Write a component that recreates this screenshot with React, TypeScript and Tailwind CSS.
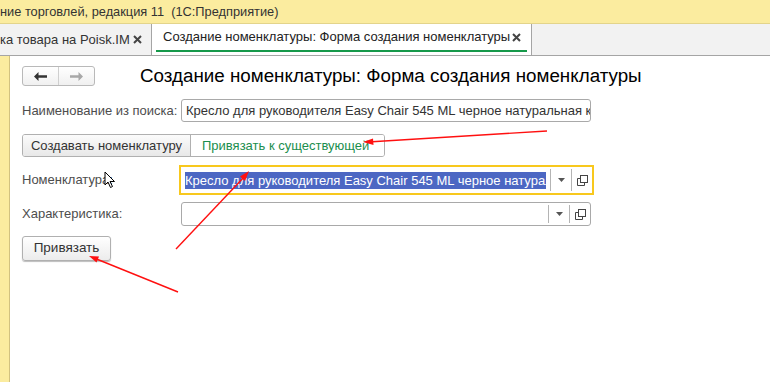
import React from 'react';

const font = { fontFamily: '"Liberation Sans", Arial, sans-serif' };

const CloseX: React.FC = () => (
  <svg width="9" height="9" viewBox="0 0 9 9" stroke="#444" strokeWidth="2">
    <path d="M1 1 L8 8 M8 1 L1 8" />
  </svg>
);

const DropButtons: React.FC = () => (
  <div className="flex h-full items-stretch">
    <div className="flex w-[21px] items-center justify-center border-l border-[#b4b4b4] my-[2px]">
      <svg width="7" height="4" viewBox="0 0 7 4">
        <path d="M0 0 H7 L3.5 4 Z" fill="#555" />
      </svg>
    </div>
    <div className="flex w-[21px] items-center justify-center border-l border-[#b4b4b4] my-[2px]">
      <svg width="11" height="11" viewBox="0 0 11 11" fill="none" stroke="#444" strokeWidth="1">
        <rect x="3.5" y="0.5" width="7" height="7" />
        <path d="M0.5 3.5 V10.5 H7.5 V8" />
        <path d="M0.5 3.5 H3" />
      </svg>
    </div>
  </div>
);

const Arrows: React.FC = () => (
  <svg className="absolute inset-0 pointer-events-none" width="770" height="382" viewBox="0 0 770 382">
    <g stroke="#ff1010" strokeWidth="1.4" fill="#ff1010">
      <line x1="547" y1="131" x2="368" y2="142" />
      <polygon points="363,142 373,138.5 373.5,145" stroke="none" />
      <line x1="176" y1="249" x2="246" y2="175" />
      <polygon points="249,171 245,181 240,176.5" stroke="none" />
      <line x1="178" y1="292" x2="94" y2="258" />
      <polygon points="89,256 99,256.5 96.5,262.5" stroke="none" />
    </g>
  </svg>
);

const Cursor: React.FC = () => (
  <svg className="absolute left-[104px] top-[171px] pointer-events-none" width="12" height="18" viewBox="0 0 12 18">
    <path d="M1 1 V14 L4 11 L6.5 16.5 L8.5 15.5 L6 10.5 H10.5 Z" fill="#fff" stroke="#000" strokeWidth="1" strokeLinejoin="round" />
  </svg>
);

export default function App() {
  return (
    <div className="relative w-[770px] h-[382px] overflow-hidden bg-white text-[13px]" style={font}>
      {/* заголовок окна */}
      <div className="h-[24px] bg-[#fbec9f] border-b border-[#e3d48b] flex items-center text-[12.8px] text-[#333] whitespace-nowrap">
        ние торговлей, редакция 11&nbsp;&nbsp;(1С:Предприятие)
      </div>

      {/* вкладки */}
      <div className="h-[32px] bg-[#f2f2f2] border-b border-[#a5a5a5] flex text-[13px] text-[#333] whitespace-nowrap">
        <div className="w-[152px] border-r border-[#a5a5a5] flex items-center justify-between pr-[9px]">
          <span>ка товара на Poisk.IM</span>
          <CloseX />
        </div>
        <div className="w-[380px] bg-white border-r border-[#a5a5a5] flex flex-col">
          <div className="flex-1 flex items-center justify-between pl-[11px] pr-[10px]">
            <span className="text-[#222]">Создание номенклатуры: Форма создания номенклатуры</span>
            <CloseX />
          </div>
          <div className="h-[2px] bg-[#16994a] mx-[4px] mb-[3px]" />
        </div>
      </div>

      <div className="flex h-[326px]">
        <div className="w-[10px] bg-[#fbec9f] border-r border-[#d2c27f]" />
        <div className="flex-1 pl-[12px] text-[#4d4d4d]">
          {/* навигация и заголовок */}
          <div className="flex items-center mt-[9px] h-[22px]">
            <div className="flex h-[20px] w-[73px] rounded-[3px] border border-[#b9b9b9] bg-gradient-to-b from-white to-[#f0f0f0]">
              <div className="flex-1 flex items-center justify-center border-r border-[#cfcfcf]">
                <svg width="13" height="9" viewBox="0 0 13 9"><path d="M0 4.5 L4.5 0 V3.3 H13 V5.7 H4.5 V9 Z" fill="#333" /></svg>
              </div>
              <div className="flex-1 flex items-center justify-center">
                <svg width="13" height="9" viewBox="0 0 13 9"><path d="M13 4.5 L8.5 0 V3.3 H0 V5.7 H8.5 V9 Z" fill="#a8a8a8" /></svg>
              </div>
            </div>
            <div className="ml-[45px] text-[18.8px] text-black leading-none whitespace-nowrap">
              Создание номенклатуры: Форма создания номенклатуры
            </div>
          </div>

          {/* наименование из поиска */}
          <div className="flex items-center mt-[12px] h-[23px]">
            <div className="w-[159px] whitespace-nowrap">Наименование из поиска:</div>
            <div className="w-[410px] h-[23px] border border-[#a9a9a9] rounded-[3px] flex items-center pl-[4px] overflow-hidden whitespace-nowrap text-[#333]">
              Кресло для руководителя Easy Chair 545 ML черное натуральная кожа
            </div>
          </div>

          {/* переключатель */}
          <div className="flex mt-[12px] h-[23px] w-[363px] border border-[#b0b0b0] rounded-[3px] overflow-hidden text-[#333]">
            <div className="w-[168px] flex items-center justify-center bg-gradient-to-b from-[#fbfbfb] to-[#e8e8e8] border-r border-[#b0b0b0]">
              Создавать номенклатуру
            </div>
            <div className="flex-1 flex items-center pl-[11px] bg-white text-[#1b8e4e]">
              Привязать к существующей
            </div>
          </div>

          {/* номенклатура */}
          <div className="flex items-center mt-[8px] h-[30px]">
            <div className="w-[157px]">Номенклатура:</div>
            <div className="w-[415px] h-[30px] border-[2px] border-[#f8c81d] flex items-stretch bg-white">
              <div className="flex-1 flex items-center pl-[4px] overflow-hidden whitespace-nowrap">
                <span className="bg-[#4c67c3] text-white leading-[17px] overflow-hidden w-[361px]">
                  Кресло для руководителя Easy Chair 545 ML черное натуральная кожа
                </span>
              </div>
              <DropButtons />
            </div>
          </div>

          {/* характеристика */}
          <div className="flex items-center mt-[7px] h-[24px]">
            <div className="w-[159px]">Характеристика:</div>
            <div className="w-[410px] h-[24px] border border-[#a9a9a9] rounded-[3px] flex items-stretch">
              <div className="flex-1" />
              <DropButtons />
            </div>
          </div>

          {/* привязать */}
          <div className="mt-[10px] w-[89px] h-[25px] rounded-[3px] border border-[#b0b0b0] bg-gradient-to-b from-white to-[#ececec] shadow-[0_1px_1px_#bdbdbd] flex items-center justify-center text-[13.5px] text-[#333]">
            Привязать
          </div>
        </div>
      </div>

      <Cursor />
      <Arrows />
    </div>
  );
}
